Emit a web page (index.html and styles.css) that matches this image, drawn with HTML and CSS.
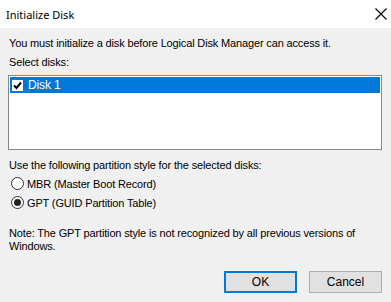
FILE: index.html
```html
<!DOCTYPE html>
<html lang="en">
<head>
  <meta charset="UTF-8">
  <title>Initialize Disk</title>
  <link rel="stylesheet" href="styles.css">
</head>
<body>
  <div class="dialog">
    <div class="titlebar">
      <span class="title">Initialize Disk</span>
      <svg class="close" width="12" height="12" viewBox="0 0 12 12">
        <path d="M0.5 0.5 L11.5 11.5 M11.5 0.5 L0.5 11.5" stroke="#000" stroke-width="1.1" fill="none"/>
      </svg>
    </div>

    <div class="content">
      <p class="intro">You must initialize a disk before Logical Disk Manager can access it.</p>
      <p class="label">Select disks:</p>
      <div class="listbox">
        <div class="item selected">
          <span class="check">
            <svg width="9" height="9" viewBox="0 0 9 9">
              <path d="M1 4.5 L3.5 7 L8 1.5" stroke="#000" stroke-width="2" fill="none"/>
            </svg>
          </span>
          <span>Disk 1</span>
        </div>
      </div>

      <p class="label partition">Use the following partition style for the selected disks:</p>
      <div class="radio-group">
        <div class="radio"><span class="dot"></span>MBR (Master Boot Record)</div>
        <div class="radio"><span class="dot on"></span>GPT (GUID Partition Table)</div>
      </div>

      <p class="note">Note: The GPT partition style is not recognized by all previous versions of Windows.</p>

      <div class="buttons">
        <button class="btn default">OK</button>
        <button class="btn">Cancel</button>
      </div>
    </div>
  </div>
</body>
</html>
```

FILE: styles.css
```css
body {
  margin: 0;
  background-color: #f0f0f0;
  font-family: 'Liberation Sans', Arial, sans-serif;
  font-size: 11px;
  letter-spacing: -0.15px;
  color: #000;
}

.dialog {
  width: 391px;
  height: 302px;
  overflow: hidden;
}

.titlebar {
  height: 28px;
  background: #fff;
  display: flex;
  align-items: center;
  justify-content: space-between;
  padding: 0 4px 0 6px;
}

.title {
  font-family: 'Noto Sans', sans-serif;
  font-size: 11px;
  letter-spacing: 0;
}

.content {
  padding: 0 9px 0 8px;
}

p {
  margin: 0;
  line-height: 13px;
}

.intro {
  margin-top: 9px;
  padding-left: 1px;
}

.label {
  margin-top: 6px;
  padding-left: 1px;
}

.listbox {
  margin-top: 6px;
  height: 71px;
  background: #fff;
  border: 1px solid #828790;
  padding: 1px;
}

.item {
  height: 16px;
  display: flex;
  align-items: center;
  gap: 5px;
  padding-left: 2px;
  font-size: 12px;
}

.item.selected {
  background: #0078d7;
  color: #fff;
}

.check {
  width: 11px;
  height: 11px;
  background: #fff;
  display: flex;
  align-items: center;
  justify-content: center;
}

.partition {
  margin-top: 9px;
}

.radio-group {
  margin-top: 5px;
  display: flex;
  flex-direction: column;
  gap: 6px;
}

.radio {
  display: flex;
  align-items: center;
  gap: 3px;
  height: 13px;
  padding-left: 3px;
}

.dot {
  width: 11px;
  height: 11px;
  border: 1px solid #333;
  border-radius: 50%;
  background: #fff;
  display: flex;
  align-items: center;
  justify-content: center;
}

.dot.on::after {
  content: "";
  width: 7px;
  height: 7px;
  border-radius: 50%;
  background: #222;
}

.note {
  margin-top: 18px;
  padding-left: 1px;
  padding-right: 20px;
}

.buttons {
  margin-top: 18px;
  display: flex;
  justify-content: flex-end;
  gap: 12px;
}

.btn {
  width: 73px;
  height: 22px;
  font-family: inherit;
  font-size: 12px;
  background: #e1e1e1;
  border: 1px solid #adadad;
  padding: 0;
}

.btn.default {
  border: 2px solid #0078d7;
}
```
